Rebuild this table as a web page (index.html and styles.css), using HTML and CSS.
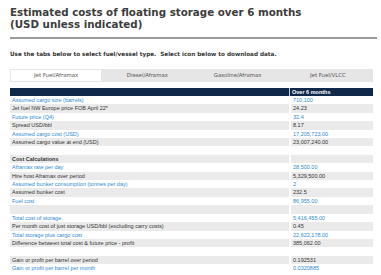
FILE: index.html
```html
<!DOCTYPE html>
<html lang="en">
<head>
    <meta charset="UTF-8">
    <meta name="viewport" content="width=device-width, initial-scale=1.0">
    <title>Floating storage costs</title>
    <link rel="stylesheet" href="styles.css">
</head>
<body>
    <div class="container">
        <h1>Estimated costs of floating storage over 6 months<br>(USD unless indicated)</h1>
        <hr class="rule">

        <p class="intro">Use the tabs below to select fuel/vessel type.&nbsp; Select icon below to download data.</p>

        <!-- TABS -->
        <div class="tabs">
            <div class="tab active">Jet Fuel/Aframax</div>
            <div class="tab">Diesel/Aframax</div>
            <div class="tab">Gasoline/Aframax</div>
            <div class="tab">Jet Fuel/VLCC</div>
        </div>

        <!-- TABLE -->
        <table class="costs">
            <thead>
                <tr><th></th><th class="val">Over 6 months</th></tr>
            </thead>
            <tbody>
                <tr class="input"><td>Assumed cargo size (barrels)</td><td class="val">710,100</td></tr>
                <tr><td>Jet fuel NW Europe price FOB April 22*</td><td class="val">24.23</td></tr>
                <tr class="input"><td>Future price (Q4)</td><td class="val">32.4</td></tr>
                <tr><td>Spread USD/bbl</td><td class="val">8.17</td></tr>
                <tr class="input"><td>Assumed cargo cost (USD)</td><td class="val">17,205,723.00</td></tr>
                <tr><td>Assumed cargo value at end (USD)</td><td class="val">23,007,240.00</td></tr>
                <tr><td>&nbsp;</td><td class="val"></td></tr>
                <tr class="section"><td>Cost Calculations</td><td class="val"></td></tr>
                <tr class="input"><td>Aframax rate per day</td><td class="val">28,500.00</td></tr>
                <tr><td>Hire host Aframax over period</td><td class="val">5,329,500.00</td></tr>
                <tr class="input"><td>Assumed bunker consumption (tonnes per day)</td><td class="val">2</td></tr>
                <tr><td>Assumed bunker cost</td><td class="val">232.5</td></tr>
                <tr class="input"><td>Fuel cost</td><td class="val">86,955.00</td></tr>
                <tr><td>&nbsp;</td><td class="val"></td></tr>
                <tr class="input"><td>Total cost of storage</td><td class="val">5,416,455.00</td></tr>
                <tr><td>Per month cost of just storage USD/bbl (excluding carry costs)</td><td class="val">0.45</td></tr>
                <tr class="input"><td>Total storage plus cargo cost</td><td class="val">22,622,178.00</td></tr>
                <tr><td>Difference between total cost &amp; future price - profit</td><td class="val">385,062.00</td></tr>
                <tr><td>&nbsp;</td><td class="val"></td></tr>
                <tr><td>Gain or profit per barrel over period</td><td class="val">0.192531</td></tr>
                <tr class="input"><td>Gain or profit per barrel per month</td><td class="val">0.0320885</td></tr>
            </tbody>
        </table>
    </div>
</body>
</html>
```

FILE: styles.css
```css
* {
    margin: 0;
    padding: 0;
    box-sizing: border-box;
}

body {
    font-family: 'Liberation Sans', Arial, sans-serif;
    background: #fff;
    color: #333;
}

.container {
    padding: 7px 8px 0 10px;
}

h1 {
    font-family: 'DejaVu Sans', Verdana, sans-serif;
    font-size: 10.3px;
    line-height: 11.5px;
    font-weight: bold;
    color: #3c3c3c;
}

.rule {
    border: none;
    height: 2px;
    background: #9a9a9a;
    margin: 7px -4px 0 0;
}

.intro {
    font-family: 'DejaVu Sans', Verdana, sans-serif;
    font-size: 5.7px;
    font-weight: bold;
    color: #333;
    margin-top: 12px;
    line-height: 7px;
}

.tabs {
    display: flex;
    background: #e6e6e6;
    margin-top: 11px;
    height: 13px;
}

.tab {
    flex: 1;
    text-align: center;
    font-family: 'DejaVu Sans', Verdana, sans-serif;
    font-size: 5.4px;
    line-height: 13px;
    color: #555;
}

.tab.active {
    background: #fff;
    border: 1px solid #e6e6e6;
    line-height: 11px;
}

.costs {
    width: 100%;
    border-collapse: separate;
    border-spacing: 0;
    margin-top: 6px;
    font-size: 5.5px;
}

.costs th,
.costs td {
    padding: 0 2px;
    line-height: 8.4px;
    height: 8.4px;
    text-align: left;
    white-space: nowrap;
}

.costs th {
    background: #10294a;
    color: #fff;
    font-weight: bold;
    line-height: 8px;
    height: 8px;
}

.costs .val {
    width: 84px;
    border-left: 2px solid #fff;
}

.costs th.val {
    border-left: 1px solid #c5ced9;
}

.costs tbody tr:nth-child(even) td {
    background: #eaeaea;
}

.costs tr.input td {
    color: #2f8ad6;
}

.costs tr.section td {
    font-weight: bold;
}
```
